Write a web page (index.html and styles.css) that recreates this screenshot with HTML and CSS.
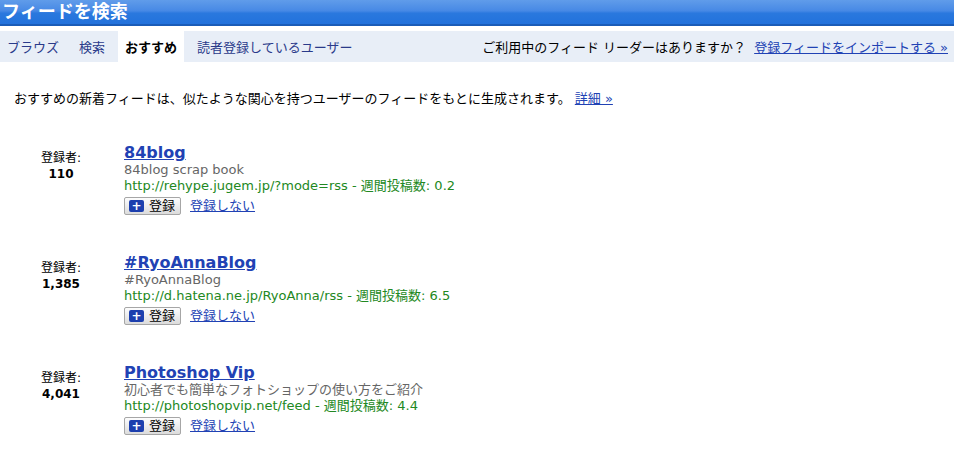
FILE: index.html
```html
<!DOCTYPE html>
<html lang="ja">
<head>
  <meta charset="UTF-8">
  <title>フィードを検索</title>
  <link rel="stylesheet" href="styles.css">
</head>
<body>
  <div class="header">フィードを検索</div>
  <div class="tabbar">
    <div class="tabs">
      <span class="tab">ブラウズ</span>
      <span class="tab">検索</span>
      <span class="tab active">おすすめ</span>
      <span class="tab">読者登録しているユーザー</span>
    </div>
    <div class="import">ご利用中のフィード リーダーはありますか？ <a href="#">登録フィードをインポートする »</a></div>
  </div>
  <p class="intro">おすすめの新着フィードは、似たような関心を持つユーザーのフィードをもとに生成されます。 <a href="#">詳細 »</a></p>

  <div class="feed">
    <div class="subs">
      <div>登録者:</div>
      <b>110</b>
    </div>
    <div class="info">
      <a class="title" href="#">84blog</a>
      <div class="desc">84blog scrap book</div>
      <div class="url">http://rehype.jugem.jp/?mode=rss - 週間投稿数: 0.2</div>
      <div class="actions">
        <button class="add"><span class="plus">+</span>登録</button>
        <a href="#">登録しない</a>
      </div>
    </div>
  </div>

  <div class="feed">
    <div class="subs">
      <div>登録者:</div>
      <b>1,385</b>
    </div>
    <div class="info">
      <a class="title" href="#">#RyoAnnaBlog</a>
      <div class="desc">#RyoAnnaBlog</div>
      <div class="url">http://d.hatena.ne.jp/RyoAnna/rss - 週間投稿数: 6.5</div>
      <div class="actions">
        <button class="add"><span class="plus">+</span>登録</button>
        <a href="#">登録しない</a>
      </div>
    </div>
  </div>

  <div class="feed">
    <div class="subs">
      <div>登録者:</div>
      <b>4,041</b>
    </div>
    <div class="info">
      <a class="title" href="#">Photoshop Vip</a>
      <div class="desc">初心者でも簡単なフォトショップの使い方をご紹介</div>
      <div class="url">http://photoshopvip.net/feed - 週間投稿数: 4.4</div>
      <div class="actions">
        <button class="add"><span class="plus">+</span>登録</button>
        <a href="#">登録しない</a>
      </div>
    </div>
  </div>
</body>
</html>
```
FILE: styles.css
```css
body {
  margin: 0;
  font-family: "DejaVu Sans", "Noto Sans CJK JP", sans-serif;
  font-size: 13px;
  color: #000;
  background: #fff;
}
a {
  color: #2142b4;
}
.header {
  height: 24px;
  line-height: 24px;
  padding-left: 2px;
  font-size: 18px;
  font-weight: bold;
  color: #fff;
  background: linear-gradient(#609cea, #4789e5 45%, #2a78de 55%, #2272dc);
  border-bottom: 2px solid #1a5cb8;
}
.tabbar {
  display: flex;
  justify-content: space-between;
  align-items: stretch;
  height: 31px;
  margin-top: 5px;
  background: #e8eef7;
}
.tabs {
  display: flex;
  gap: 6px;
}
.tab {
  display: flex;
  align-items: center;
  padding: 0 7px;
  color: #2a3a8a;
}
.tab.active {
  background: #fff;
  color: #000;
  font-weight: bold;
}
.import {
  display: flex;
  align-items: center;
  gap: 4px;
  padding-right: 6px;
  white-space: pre;
}
.intro {
  margin: 26px 0 0 14px;
}
.feed {
  display: flex;
  margin-top: 37px;
}
.feed + .feed {
  margin-top: 39px;
}
.subs {
  width: 122px;
  padding-top: 6px;
  text-align: center;
  font-size: 12px;
  line-height: 16px;
}
.info {
  margin-left: 2px;
  line-height: 16px;
}
.title {
  font-size: 16px;
  font-weight: bold;
  line-height: 18px;
}
.desc {
  color: #666;
}
.url {
  color: #228822;
}
.actions {
  display: flex;
  align-items: center;
  gap: 9px;
  margin-top: 3px;
}
.add {
  display: flex;
  align-items: center;
  gap: 5px;
  height: 18px;
  padding: 0 5px 0 4px;
  font: inherit;
  font-size: 13px;
  background: linear-gradient(#fdfdfd, #dcdcdc);
  border: 1px solid #a6a6a6;
  border-radius: 2px;
}
.plus {
  display: inline-block;
  width: 15px;
  height: 12px;
  line-height: 12px;
  text-align: center;
  font-weight: bold;
  font-size: 12px;
  color: #fff;
  background: #1c3fae;
  border-radius: 2px;
}
```
